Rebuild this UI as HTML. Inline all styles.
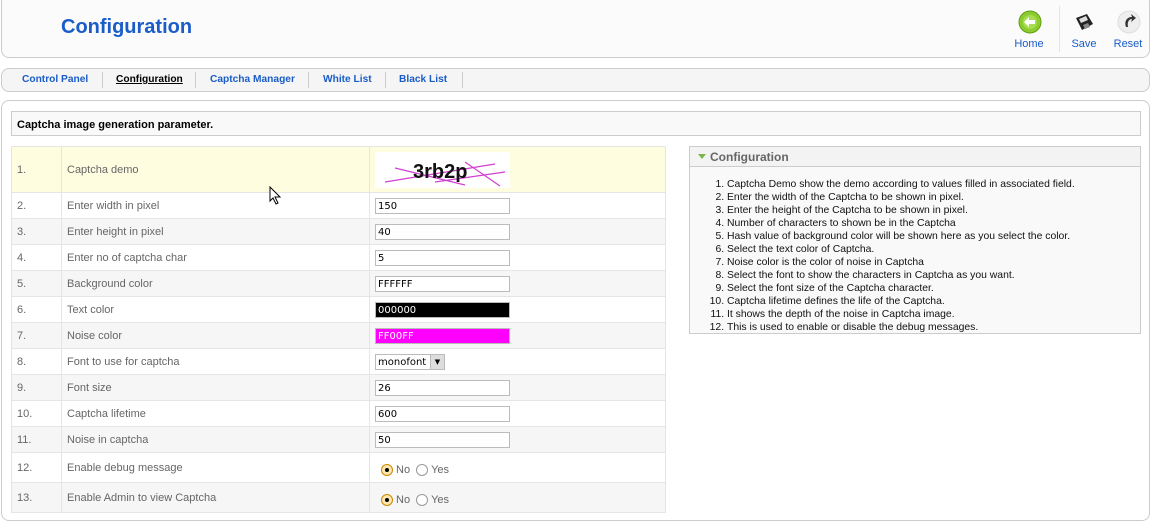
<!DOCTYPE html>
<html><head><meta charset="utf-8"><style>
*{box-sizing:border-box;margin:0;padding:0}
body{width:1151px;height:522px;background:#fff;font-family:"Liberation Sans",Arial,sans-serif;position:relative;overflow:hidden;font-size:11px}
.abs{position:absolute}
#hdr{left:1px;top:-6px;width:1149px;height:64px;border:1px solid #ccc;border-radius:8px;background:#fbfbfb}
#title{left:61px;top:16px;font-size:20px;font-weight:bold;color:#1a5cc8}
.tb{font-size:11px;color:#1a5cc8;text-align:center;width:40px}
#nav{left:1px;top:68px;width:1149px;height:24px;border:1px solid #ccc;border-radius:8px;background:#f5f5f5}
.nv{top:74px;font-size:10.2px;font-weight:bold;color:#1a5cc8}
.sep{top:72px;width:1px;height:16px;background:#ccc}
#main{left:1px;top:100px;width:1149px;height:421px;border:1px solid #ccc;border-radius:8px;background:#fff}
#cap{left:11px;top:111px;width:1130px;height:25px;border:1px solid #ccc;background:#f9f9f9;font-weight:bold;color:#000;padding:7px 0 0 5px}
table{position:absolute;left:11px;top:146px;border-collapse:collapse;width:655px}
td{border:1px solid #e5e5e5;color:#666;font-size:11px;padding:0 5px;height:26px}
tr.g td{background:#f6f6f6}
tr.y td{background:#fffde0;height:46px}
td.n{width:50px}
td.l{width:308px}
.inp{width:135px;height:16px;border:1px solid #bbb;font-family:"DejaVu Sans",sans-serif;font-size:10px;color:#000;padding:1px 2px;line-height:13px;background:#fff}
.rad{display:inline-block;width:12px;height:12px;border-radius:50%;border:1px solid #999;vertical-align:middle;background:#fff;position:relative}
.rad.on{border-color:#c80;background:#fde7b0}
.rad.on:after{content:"";position:absolute;left:3px;top:3px;width:4px;height:4px;border-radius:50%;background:#000}
#rp{left:689px;top:146px;width:452px;height:188px;border:1px solid #ccc;background:#f9f9f9}
#rph{height:20px;border-bottom:1px solid #ccc;font-size:12px;font-weight:bold;color:#666;padding:3px 0 0 20px;position:relative;background:#f3f3f3}
ol{margin:11px 0 0 37px;font-size:10.4px;color:#111;line-height:13px}
</style></head><body>
<div id="hdr" class="abs"></div>
<div id="title" class="abs">Configuration</div>
<svg class="abs" style="left:1018px;top:10px" width="24" height="24"><circle cx="12" cy="12" r="11" fill="#8ccc2e" stroke="#5e9e14"/><circle cx="12" cy="12" r="7" fill="#a8dc52"/><path d="M6 12 L11 7 V10 H17 V14 H11 V17 Z" fill="#fff"/></svg>
<div class="abs tb" style="left:1009px;top:38px">Home</div>
<div class="abs" style="left:1059px;top:6px;width:1px;height:46px;background:#e5e5e5"></div>
<svg class="abs" style="left:1073px;top:12px" width="22" height="22"><path d="M3 6 L14 2 L20 12 L9 18 Z" fill="#222"/><path d="M6 7 L13 4 L15 8 L8 11 Z" fill="#ddd"/><path d="M10 13 L15 11 L17 15 L12 17 Z" fill="#888"/></svg>
<div class="abs tb" style="left:1064px;top:38px">Save</div>
<svg class="abs" style="left:1117px;top:9px" width="24" height="26"><circle cx="12" cy="13" r="11" fill="#eee" stroke="#ddd"/><path d="M9 18 C7 12 10 8 15 8 L14 5 L19 9 L14 13 L15 10 C12 10 10 13 11 18 Z" fill="#333"/></svg>
<div class="abs tb" style="left:1108px;top:38px">Reset</div>

<div id="nav" class="abs"></div>
<div class="abs nv" style="left:22px">Control Panel</div>
<div class="abs sep" style="left:102px"></div>
<div class="abs nv" style="left:116px;color:#000;text-decoration:underline">Configuration</div>
<div class="abs sep" style="left:195px"></div>
<div class="abs nv" style="left:210px">Captcha Manager</div>
<div class="abs sep" style="left:308px"></div>
<div class="abs nv" style="left:323px">White List</div>
<div class="abs sep" style="left:385px"></div>
<div class="abs nv" style="left:399px">Black List</div>
<div class="abs sep" style="left:462px"></div>

<div id="main" class="abs"></div>
<div id="cap" class="abs">Captcha image generation parameter.</div>

<table>
<tr class="y"><td class="n">1.</td><td class="l">Captcha demo</td><td><div style="width:135px;height:36px;background:#fff;position:relative"><svg width="135" height="36" class="abs" style="left:0;top:0"><path d="M10 30 L120 12 M20 16 L90 33 M60 30 L130 20 M90 10 L125 34" stroke="#d040d0" stroke-width="1.2"/><text x="38" y="26" font-family="Liberation Sans" font-weight="bold" font-size="20" fill="#111">3rb2p</text></svg></div></td></tr>
<tr><td class="n">2.</td><td class="l">Enter width in pixel</td><td><div class="inp">150</div></td></tr>
<tr class="g"><td class="n">3.</td><td class="l">Enter height in pixel</td><td><div class="inp">40</div></td></tr>
<tr><td class="n">4.</td><td class="l">Enter no of captcha char</td><td><div class="inp">5</div></td></tr>
<tr class="g"><td class="n">5.</td><td class="l">Background color</td><td><div class="inp">FFFFFF</div></td></tr>
<tr><td class="n">6.</td><td class="l">Text color</td><td><div class="inp" style="background:#000;color:#fff">000000</div></td></tr>
<tr class="g"><td class="n">7.</td><td class="l">Noise color</td><td><div class="inp" style="background:#ff00ff;color:#fff">FF00FF</div></td></tr>
<tr><td class="n">8.</td><td class="l">Font to use for captcha</td><td><div class="inp" style="width:70px;position:relative;background:#fff">monofont<span style="position:absolute;right:0;top:0;width:14px;height:14px;background:#ddd;border-left:1px solid #bbb;font-size:7px;text-align:center;line-height:14px">▼</span></div></td></tr>
<tr class="g"><td class="n">9.</td><td class="l">Font size</td><td><div class="inp">26</div></td></tr>
<tr><td class="n">10.</td><td class="l">Captcha lifetime</td><td><div class="inp">600</div></td></tr>
<tr class="g"><td class="n">11.</td><td class="l">Noise in captcha</td><td><div class="inp">50</div></td></tr>
<tr><td class="n" style="height:30px">12.</td><td class="l">Enable debug message</td><td style="padding-left:11px;padding-top:5px"><span class="rad on"></span> No &nbsp;<span class="rad"></span> Yes</td></tr>
<tr class="g"><td class="n" style="height:30px">13.</td><td class="l">Enable Admin to view Captcha</td><td style="padding-left:11px;padding-top:5px"><span class="rad on"></span> No &nbsp;<span class="rad"></span> Yes</td></tr>
</table>

<div id="rp" class="abs">
<div id="rph"><span style="position:absolute;left:8px;top:7px;border-left:4px solid transparent;border-right:4px solid transparent;border-top:5px solid #7ab648"></span>Configuration</div>
<ol>
<li>Captcha Demo show the demo according to values filled in associated field.</li>
<li>Enter the width of the Captcha to be shown in pixel.</li>
<li>Enter the height of the Captcha to be shown in pixel.</li>
<li>Number of characters to shown be in the Captcha</li>
<li>Hash value of background color will be shown here as you select the color.</li>
<li>Select the text color of Captcha.</li>
<li>Noise color is the color of noise in Captcha</li>
<li>Select the font to show the characters in Captcha as you want.</li>
<li>Select the font size of the Captcha character.</li>
<li>Captcha lifetime defines the life of the Captcha.</li>
<li>It shows the depth of the noise in Captcha image.</li>
<li>This is used to enable or disable the debug messages.</li>
</ol>
</div>
<svg class="abs" style="left:269px;top:186px" width="14" height="20"><path d="M1 1 L1 15 L4 12 L7 18 L9 17 L6 11 L11 11 Z" fill="#fff" stroke="#000"/></svg>
</body></html>
